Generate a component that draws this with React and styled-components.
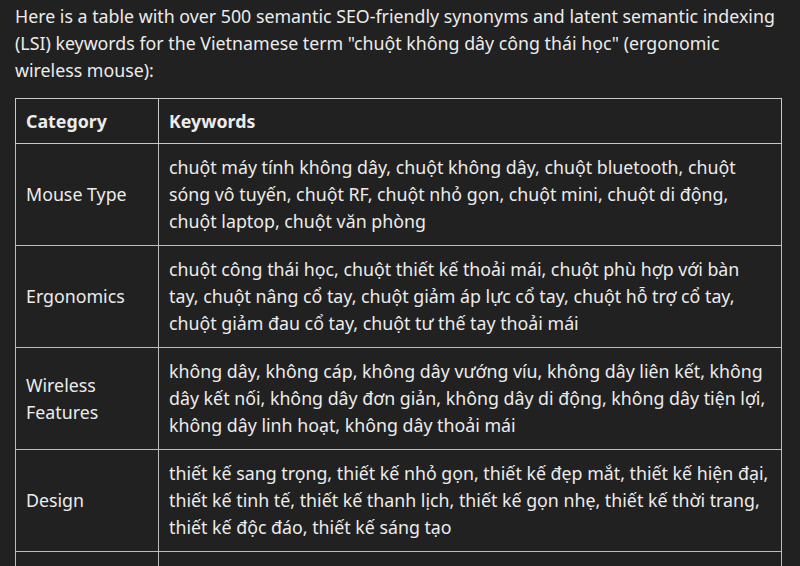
import React from "react";
import styled, { createGlobalStyle } from "styled-components";

const ROWS = [
  {
    category: "Mouse Type",
    keywords:
      "chuột máy tính không dây, chuột không dây, chuột bluetooth, chuột sóng vô tuyến, chuột RF, chuột nhỏ gọn, chuột mini, chuột di động, chuột laptop, chuột văn phòng",
  },
  {
    category: "Ergonomics",
    keywords:
      "chuột công thái học, chuột thiết kế thoải mái, chuột phù hợp với bàn tay, chuột nâng cổ tay, chuột giảm áp lực cổ tay, chuột hỗ trợ cổ tay, chuột giảm đau cổ tay, chuột tư thế tay thoải mái",
  },
  {
    category: "Wireless Features",
    keywords:
      "không dây, không cáp, không dây vướng víu, không dây liên kết, không dây kết nối, không dây đơn giản, không dây di động, không dây tiện lợi, không dây linh hoạt, không dây thoải mái",
  },
  {
    category: "Design",
    keywords:
      "thiết kế sang trọng, thiết kế nhỏ gọn, thiết kế đẹp mắt, thiết kế hiện đại, thiết kế tinh tế, thiết kế thanh lịch, thiết kế gọn nhẹ, thiết kế thời trang, thiết kế độc đáo, thiết kế sáng tạo",
  },
  {
    category: "Battery",
    keywords:
      "chuột sạc pin, chuột tiết kiệm pin, chuột pin lâu, chuột pin sạc lại được, chuột dùng pin AA, chuột tự động tắt nguồn, chuột báo pin yếu",
  },
];

const GlobalStyle = createGlobalStyle`
  html, body {
    margin: 0;
    padding: 0;
    background: #212121;
    overflow: hidden;
  }
  body {
    font-family: "Noto Sans", "Open Sans", sans-serif;
    color: #ececec;
  }
`;

const Page = styled.div`
  padding: 3px 18px 0 15px;
  font-size: 17.8px;
  line-height: 27px;
`;

const Intro = styled.p`
  margin: 0 0 14px;
`;

const Table = styled.table`
  width: 767px;
  border-collapse: collapse;
  table-layout: fixed;
`;

const HeadCell = styled.th`
  width: ${(props) => props.width || "auto"};
  text-align: left;
  font-weight: 700;
  padding: 9px 10px 8px;
  border: 1px solid #c9c9c9;
`;

const Cell = styled.td`
  padding: 10px 10px;
  border: 1px solid #bdbdbd;
  vertical-align: middle;
`;

const App = () => {
  return (
    <Page>
      <GlobalStyle />
      <Intro>
        Here is a table with over 500 semantic SEO-friendly synonyms and latent
        semantic indexing (LSI) keywords for the Vietnamese term "chuột không
        dây công thái học" (ergonomic wireless mouse):
      </Intro>
      <Table>
        <thead>
          <tr>
            <HeadCell width="122px">Category</HeadCell>
            <HeadCell>Keywords</HeadCell>
          </tr>
        </thead>
        <tbody>
          {ROWS.map((row, i) => (
            <tr key={i}>
              <Cell>{row.category}</Cell>
              <Cell>{row.keywords}</Cell>
            </tr>
          ))}
        </tbody>
      </Table>
    </Page>
  );
};

export default App;
